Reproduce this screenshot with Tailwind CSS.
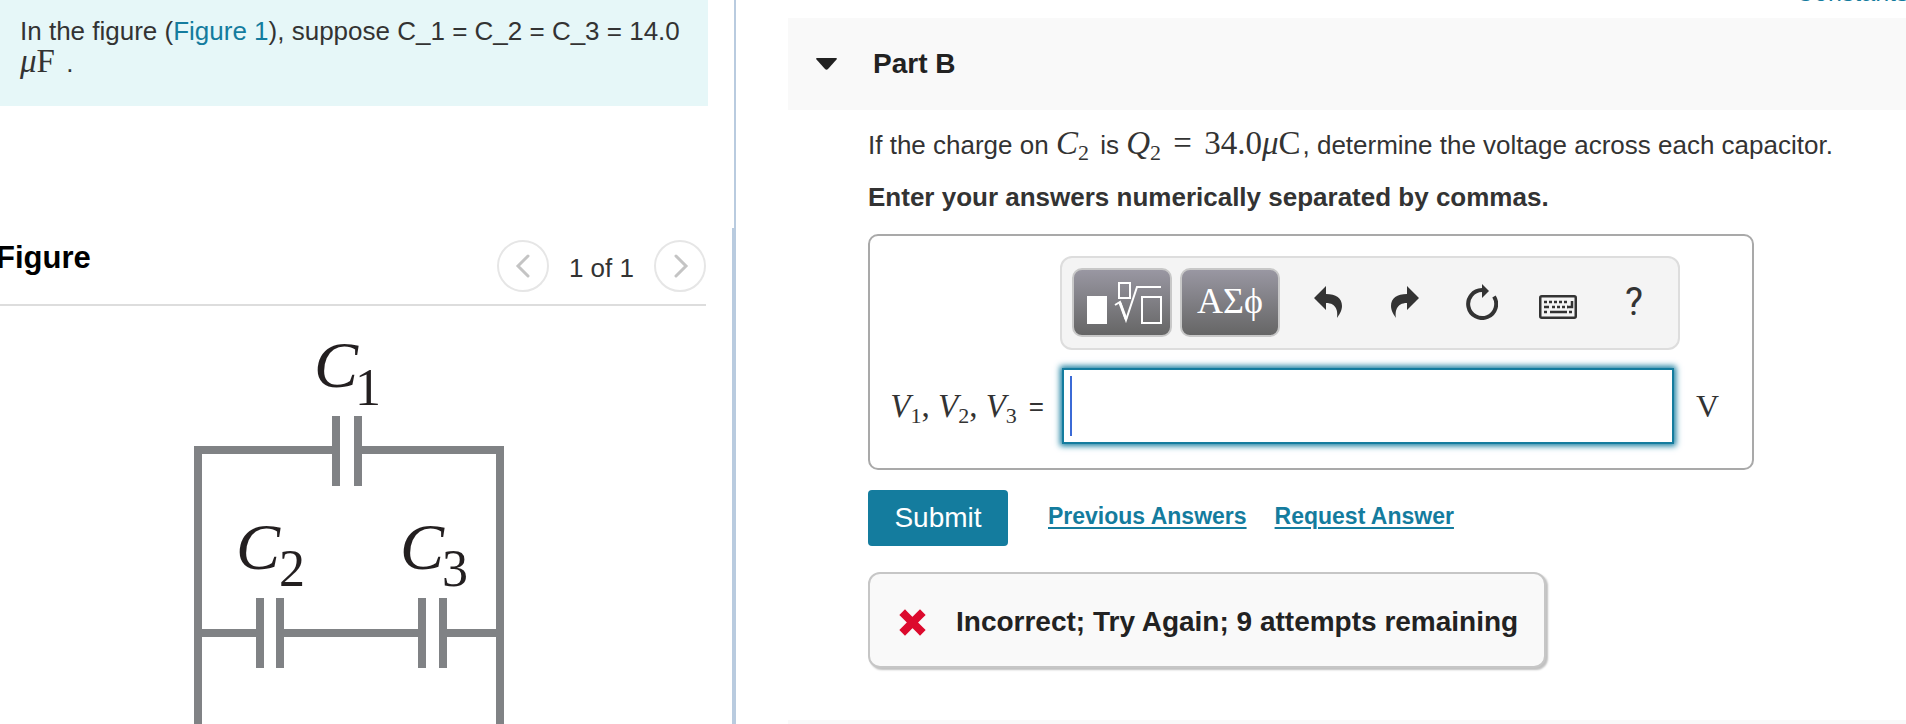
<!DOCTYPE html>
<html lang="en">
<head>
<meta charset="utf-8">
<title>Part B</title>
<script src="https://cdn.jsdelivr.net/npm/@tailwindcss/browser@4"></script>
</head>
<body class="flex h-screen overflow-hidden bg-white font-['Liberation_Sans',Arial,sans-serif] text-[26px] leading-8 text-[#333]">

<aside class="flex w-[736px] shrink-0">
  <div class="flex min-w-0 flex-1 flex-col">
    <section class="mr-6 h-[106px] shrink-0 bg-[#e6f7f8] px-5 pt-[15px]">
      <p>In the figure (<a href="#figure" class="text-[#147c9e]">Figure 1</a>), suppose C_1 = C_2 = C_3 = 14.0 <span class="mr-1 font-['Liberation_Serif',serif] text-[33px] leading-4"><i>μ</i>F</span> .</p>
    </section>
    <section id="figure" class="mt-[134px] mr-[26px] flex min-h-0 flex-1 flex-col">
      <header class="flex items-start justify-between border-b-2 border-[#ddd] pb-3">
        <h2 class="-ml-1 mt-[2px] text-[31px] font-bold text-black">Figure</h2>
        <div class="flex items-center gap-5">
          <button type="button" aria-label="Previous figure" class="flex size-[52px] items-center justify-center rounded-full border-2 border-[#e6e6e6]">
            <svg class="size-6" viewBox="0 0 24 24" fill="none" stroke="#c4c4c4" stroke-width="3" stroke-linecap="round"><path d="M17 2 7 12l10 10"/></svg>
          </button>
          <span class="mt-1">1 of 1</span>
          <button type="button" aria-label="Next figure" class="flex size-[52px] items-center justify-center rounded-full border-2 border-[#e6e6e6]">
            <svg class="size-6" viewBox="0 0 24 24" fill="none" stroke="#c4c4c4" stroke-width="3" stroke-linecap="round"><path d="m8 2 10 10L8 22"/></svg>
          </button>
        </div>
      </header>
      <svg class="ml-[180px] mt-[14px] min-h-0 w-[340px] flex-1" viewBox="180 320 340 404" preserveAspectRatio="xMinYMin slice" role="img" aria-label="Capacitor C1 in parallel with C2 and C3 in series">
        <g fill="none" stroke="#808285" stroke-width="8">
          <path d="M336 450H198V760M358 450H500V760M198 633H260M280 633H422M443 633H500"/>
          <path d="M336 416V486M358 416V486M260 598V668M280 598V668M422 598V668M443 598V668"/>
        </g>
        <g fill="#231f20" font-family="Liberation Serif, serif" font-size="66">
          <text x="314" y="387" font-style="italic">C</text><text x="355" y="405" font-size="52">1</text>
          <text x="236" y="569" font-style="italic">C</text><text x="279" y="586" font-size="52">2</text>
          <text x="400" y="569" font-style="italic">C</text><text x="442" y="586" font-size="52">3</text>
        </g>
      </svg>
    </section>
  </div>
  <div class="flex w-1 flex-col items-end bg-white" aria-hidden="true">
    <div class="h-[228px] w-[2px] bg-[#b9cbdf]"></div>
    <div class="w-1 flex-1 bg-[#b9cbdf]"></div>
  </div>
</aside>

<main class="ml-[52px] flex min-w-0 flex-1 flex-col">
  <nav class="flex h-[18px] shrink-0 items-end justify-end overflow-hidden pb-[14px]"><a href="#constants" class="-mr-4 block text-[25px] leading-6 whitespace-nowrap text-[#147c9e]">Constants |</a></nav>
  <header class="flex h-[92px] shrink-0 items-center gap-9 bg-[#f9f9f9] pl-7">
    <button type="button" aria-label="Collapse Part B" aria-expanded="true">
      <svg class="h-3 w-[21px]" viewBox="0 0 21 12" fill="#222"><path d="M1 0h19q1.500 0 .5 1.500L12 11q-1.500 1.500-3 0L.5 1.500Q-.5 0 1 0Z"/></svg>
    </button>
    <h1 class="text-[28px] font-bold text-[#222]">Part B</h1>
  </header>

  <div class="flex flex-col items-start pl-20">
    <p class="mt-[19px] whitespace-nowrap">If the charge on <span class="mr-1 font-['Liberation_Serif',serif] text-[33px] leading-4"><i>C</i><sub class="text-[22px]">2</sub></span> is <span class="font-['Liberation_Serif',serif] text-[33px] leading-4"><i>Q</i><sub class="mr-1 text-[22px]">2</sub> <span class="mr-1">=</span> 34.0<i>μ</i><span class="mr-[2px]">C</span></span>, determine the voltage across each capacitor.</p>
    <p class="mt-5 font-bold">Enter your answers numerically separated by commas.</p>

    <form id="answer" class="mt-[21px] grid w-[886px] grid-cols-[190px_620px_1fr] gap-y-[18px] rounded-[10px] border-2 border-[#a9a9a9] pt-5 pb-6">
      <div role="toolbar" aria-label="Equation editor" class="col-start-2 flex h-[94px] items-start rounded-xl border-2 border-[#ddd] bg-[#f4f4f4] pt-[10px] pl-[10px]">
        <button type="button" aria-label="Templates" class="flex h-[69px] w-[100px] items-center justify-center rounded-[10px] border-2 border-[#c8c8c8] bg-linear-to-b from-[#9997a2] to-[#666]">
          <svg class="h-12 w-[80px]" viewBox="0 0 80 48" fill="none" stroke="#fff" stroke-width="2"><path d="M5 17h20v28H5z" fill="#fff" stroke="none"/><path d="M37 4h11v15H37zM60 18h19v26H60z"/><path d="m33 26 5-3 6 18L55 8h24"/><path d="m38 24 6 16" stroke-width="3"/></svg>
        </button>
        <button type="button" aria-label="Greek letters" class="ml-2 h-[69px] w-[100px] rounded-[10px] border-2 border-[#c8c8c8] bg-linear-to-b from-[#9997a2] to-[#666] pb-1 font-['Liberation_Serif',serif] text-[36px] text-white">ΑΣϕ</button>
        <button type="button" aria-label="Undo" class="ml-[34px] mt-[18px]"><svg class="h-8 w-7" viewBox="0 0 28 32" fill="#333"><path d="M0 12 12 0v8c10 0 16 4 16 12 0 5-3 9-5 12 1-6 0-15-11-15v7Z"/></svg></button>
        <button type="button" aria-label="Redo" class="ml-[49px] mt-[18px]"><svg class="h-8 w-7" viewBox="0 0 28 32" fill="#333"><path d="M28 12 16 0v8C6 8 0 12 0 20c0 5 3 9 5 12-1-6 0-15 11-15v7Z"/></svg></button>
        <button type="button" aria-label="Reset" class="ml-[47px] mt-4"><svg class="h-9 w-8" viewBox="0 0 32 36"><path d="M16 6A14 14 0 1 0 28 12.500" fill="none" stroke="#333" stroke-width="4"/><path d="m16 0 7 7-7 7Z" fill="#333"/></svg></button>
        <button type="button" aria-label="Keyboard" class="ml-[41px] mt-[27px]"><svg class="h-6 w-[38px]" viewBox="0 0 38 24" fill="none" stroke="#333" stroke-width="2.500"><rect x="1.250" y="1.250" width="35.500" height="21.500" rx="1.500"/><path d="M5 7h23M13 12h16" stroke-dasharray="3 2"/><path d="M5 12h5M28 12h5V6M5 17h3M11 17h17M30 17h3"/></svg></button>
        <button type="button" aria-label="Help" class="ml-[48px] mt-[18px] font-[Roboto,sans-serif] text-[38px] text-[#333]">?</button>
      </div>
      <label for="v" class="col-start-1 row-start-2 flex items-center justify-end gap-3 whitespace-nowrap pr-4 text-[26px]"><span class="font-['Liberation_Serif',serif] text-[33px]"><i>V</i><sub class="text-[22px]">1</sub>, <i>V</i><sub class="text-[22px]">2</sub>, <i>V</i><sub class="text-[22px]">3</sub></span>=</label>
      <div class="col-start-2 row-start-2 mr-[6px] ml-[2px] flex h-[76px] border-2 border-[#147c9e] shadow-[0_0_6px_2px_#147c9e]">
        <span class="my-[6px] ml-[6px] w-[2px] bg-[#3b6ad6]" aria-hidden="true"></span>
        <input id="v" type="text" class="min-w-0 flex-1 bg-transparent px-2 outline-none">
      </div>
      <span class="col-start-3 row-start-2 self-center pl-4 font-['Liberation_Serif',serif] text-[32px]">V</span>
    </form>

    <div class="mt-5 flex items-center text-[23px]">
      <button type="submit" form="answer" class="h-14 w-[140px] rounded bg-[#147c9e] text-[28px] text-white">Submit</button>
      <a href="#previous" class="ml-10 pb-1 font-bold text-[#147c9e] underline decoration-2 underline-offset-3">Previous Answers</a>
      <a href="#request" class="ml-7 pb-1 font-bold text-[#147c9e] underline decoration-2 underline-offset-3">Request Answer</a>
    </div>

    <div role="status" class="mt-[26px] flex h-[96px] items-center gap-[30px] rounded-xl border-2 border-[#c6c6c6] bg-[#f9f9f9] pt-1 pr-[26px] pl-[29px] text-[28px] font-bold text-[#222] shadow-[2px_2px_2px_#c0c0c0]">
      <svg class="size-[27px]" viewBox="0 0 27 27" stroke="#dc0a2d"><path d="m6 6 15 15m0-15L6 21" stroke-linecap="square" stroke-width="8"/></svg>
      <p>Incorrect; Try Again; 9 attempts remaining</p>
    </div>
  </div>
  <div class="mt-[52px] min-h-0 flex-1 bg-[#f9f9f9]"></div>
</main>
</body>
</html>
